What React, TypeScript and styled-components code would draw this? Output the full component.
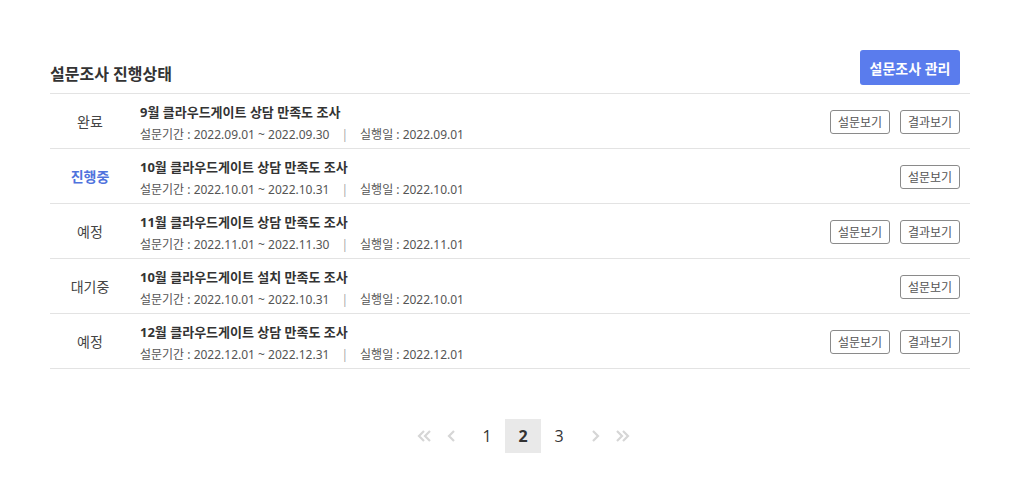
import React from "react";
import styled, { createGlobalStyle } from "styled-components";

const GlobalStyle = createGlobalStyle`
  * { box-sizing: border-box; }
  body {
    margin: 0;
    background: #fff;
    font-family: "Noto Sans", "Noto Sans CJK KR", sans-serif;
    color: #333;
  }
`;

type Survey = {
  status: string;
  title: string;
  period: string;
  date: string;
  result: boolean;
};

const surveys: Survey[] = [
  { status: "완료", title: "9월 클라우드게이트 상담 만족도 조사", period: "2022.09.01 ~ 2022.09.30", date: "2022.09.01", result: true },
  { status: "진행중", title: "10월 클라우드게이트 상담 만족도 조사", period: "2022.10.01 ~ 2022.10.31", date: "2022.10.01", result: false },
  { status: "예정", title: "11월 클라우드게이트 상담 만족도 조사", period: "2022.11.01 ~ 2022.11.30", date: "2022.11.01", result: true },
  { status: "대기중", title: "10월 클라우드게이트 설치 만족도 조사", period: "2022.10.01 ~ 2022.10.31", date: "2022.10.01", result: false },
  { status: "예정", title: "12월 클라우드게이트 상담 만족도 조사", period: "2022.12.01 ~ 2022.12.31", date: "2022.12.01", result: true },
];

const Page = styled.div`
  padding: 50px 50px 0;
`;

const Header = styled.div`
  display: flex;
  align-items: center;
  justify-content: space-between;
  height: 44px;
  padding: 0 10px 8px 0;
  border-bottom: 1px solid #e3e3e3;
`;

const Title = styled.h2`
  margin: 12px 0 0;
  font-size: 16px;
  line-height: 22px;
  font-weight: 700;
  color: #333;
`;

const ManageButton = styled.button`
  width: 100px;
  height: 35px;
  border: none;
  border-radius: 3px;
  background: #5a7ced;
  color: #fff;
  font-family: inherit;
  font-size: 14px;
  font-weight: 700;
  cursor: pointer;
`;

const List = styled.ul`
  margin: 0;
  padding: 0;
  list-style: none;
`;

const Row = styled.li`
  display: grid;
  grid-template-columns: 80px 1fr auto;
  column-gap: 10px;
  align-items: center;
  height: 55px;
  padding-right: 10px;
  border-bottom: 1px solid #e3e3e3;
`;

const Status = styled.span<{ $active: boolean }>`
  text-align: center;
  font-size: 14px;
  font-weight: ${({ $active }) => ($active ? 700 : 400)};
  color: ${({ $active }) => ($active ? "#4f73dd" : "#444")};
`;

const Info = styled.div`
  display: flex;
  flex-direction: column;
  gap: 4px;
  padding-top: 4px;
`;

const ItemTitle = styled.span`
  font-size: 13px;
  font-weight: 700;
  color: #333;
  line-height: 19px;
`;

const Meta = styled.span`
  font-size: 12px;
  color: #555;
  line-height: 18px;
`;

const Sep = styled.span`
  margin: 0 12px;
  color: #aaa;
`;

const Actions = styled.div`
  display: flex;
  gap: 10px;
  margin-top: 2px;
`;

const SmallButton = styled.button`
  width: 60px;
  height: 24px;
  padding: 0;
  border: 1px solid #8a8a8a;
  border-radius: 3px;
  background: #fff;
  color: #555;
  font-family: inherit;
  font-size: 12px;
  cursor: pointer;
`;

const Pager = styled.ul`
  display: flex;
  justify-content: center;
  align-items: center;
  margin: 50px 0 0;
  padding: 0 0 0 26px;
  list-style: none;
`;

const PageItem = styled.li<{ $current?: boolean }>`
  display: flex;
  align-items: center;
  justify-content: center;
  width: 36px;
  height: 34px;
  font-size: 16px;
  font-weight: ${({ $current }) => ($current ? 700 : 400)};
  color: #333;
  background: ${({ $current }) => ($current ? "#e9e9e9" : "transparent")};
  font-family: "Open Sans", "Noto Sans", sans-serif;
`;

const Arrow = styled.li<{ $gap?: string }>`
  display: flex;
  align-items: center;
  justify-content: center;
  width: 27px;
  height: 34px;
  margin: ${({ $gap }) => $gap || "0"};
  color: #d6d6d6;
`;

const Chevron = ({ dir, double }: { dir: "left" | "right"; double?: boolean }) => (
  <svg width={double ? 16 : 10} height="14" viewBox={double ? "0 0 16 14" : "0 0 10 14"}>
    <g
      fill="none"
      stroke="currentColor"
      strokeWidth="2.2"
      transform={dir === "right" ? `scale(-1,1) translate(-${double ? 16 : 10},0)` : undefined}
    >
      <polyline points="7,2 2,7 7,12" />
      {double && <polyline points="13,2 8,7 13,12" />}
    </g>
  </svg>
);

export default function App() {
  return (
    <Page>
      <GlobalStyle />
      <Header>
        <Title>설문조사 진행상태</Title>
        <ManageButton>설문조사 관리</ManageButton>
      </Header>
      <List>
        {surveys.map((s, i) => (
          <Row key={i}>
            <Status $active={s.status === "진행중"}>{s.status}</Status>
            <Info>
              <ItemTitle>{s.title}</ItemTitle>
              <Meta>
                설문기간 : {s.period}
                <Sep>|</Sep>
                실행일 : {s.date}
              </Meta>
            </Info>
            <Actions>
              <SmallButton>설문보기</SmallButton>
              {s.result && <SmallButton>결과보기</SmallButton>}
            </Actions>
          </Row>
        ))}
      </List>
      <Pager>
        <Arrow><Chevron dir="left" double /></Arrow>
        <Arrow $gap="0 4px 0 0"><Chevron dir="left" /></Arrow>
        <PageItem>1</PageItem>
        <PageItem $current>2</PageItem>
        <PageItem>3</PageItem>
        <Arrow $gap="0 0 0 4px"><Chevron dir="right" /></Arrow>
        <Arrow><Chevron dir="right" double /></Arrow>
      </Pager>
    </Page>
  );
}
